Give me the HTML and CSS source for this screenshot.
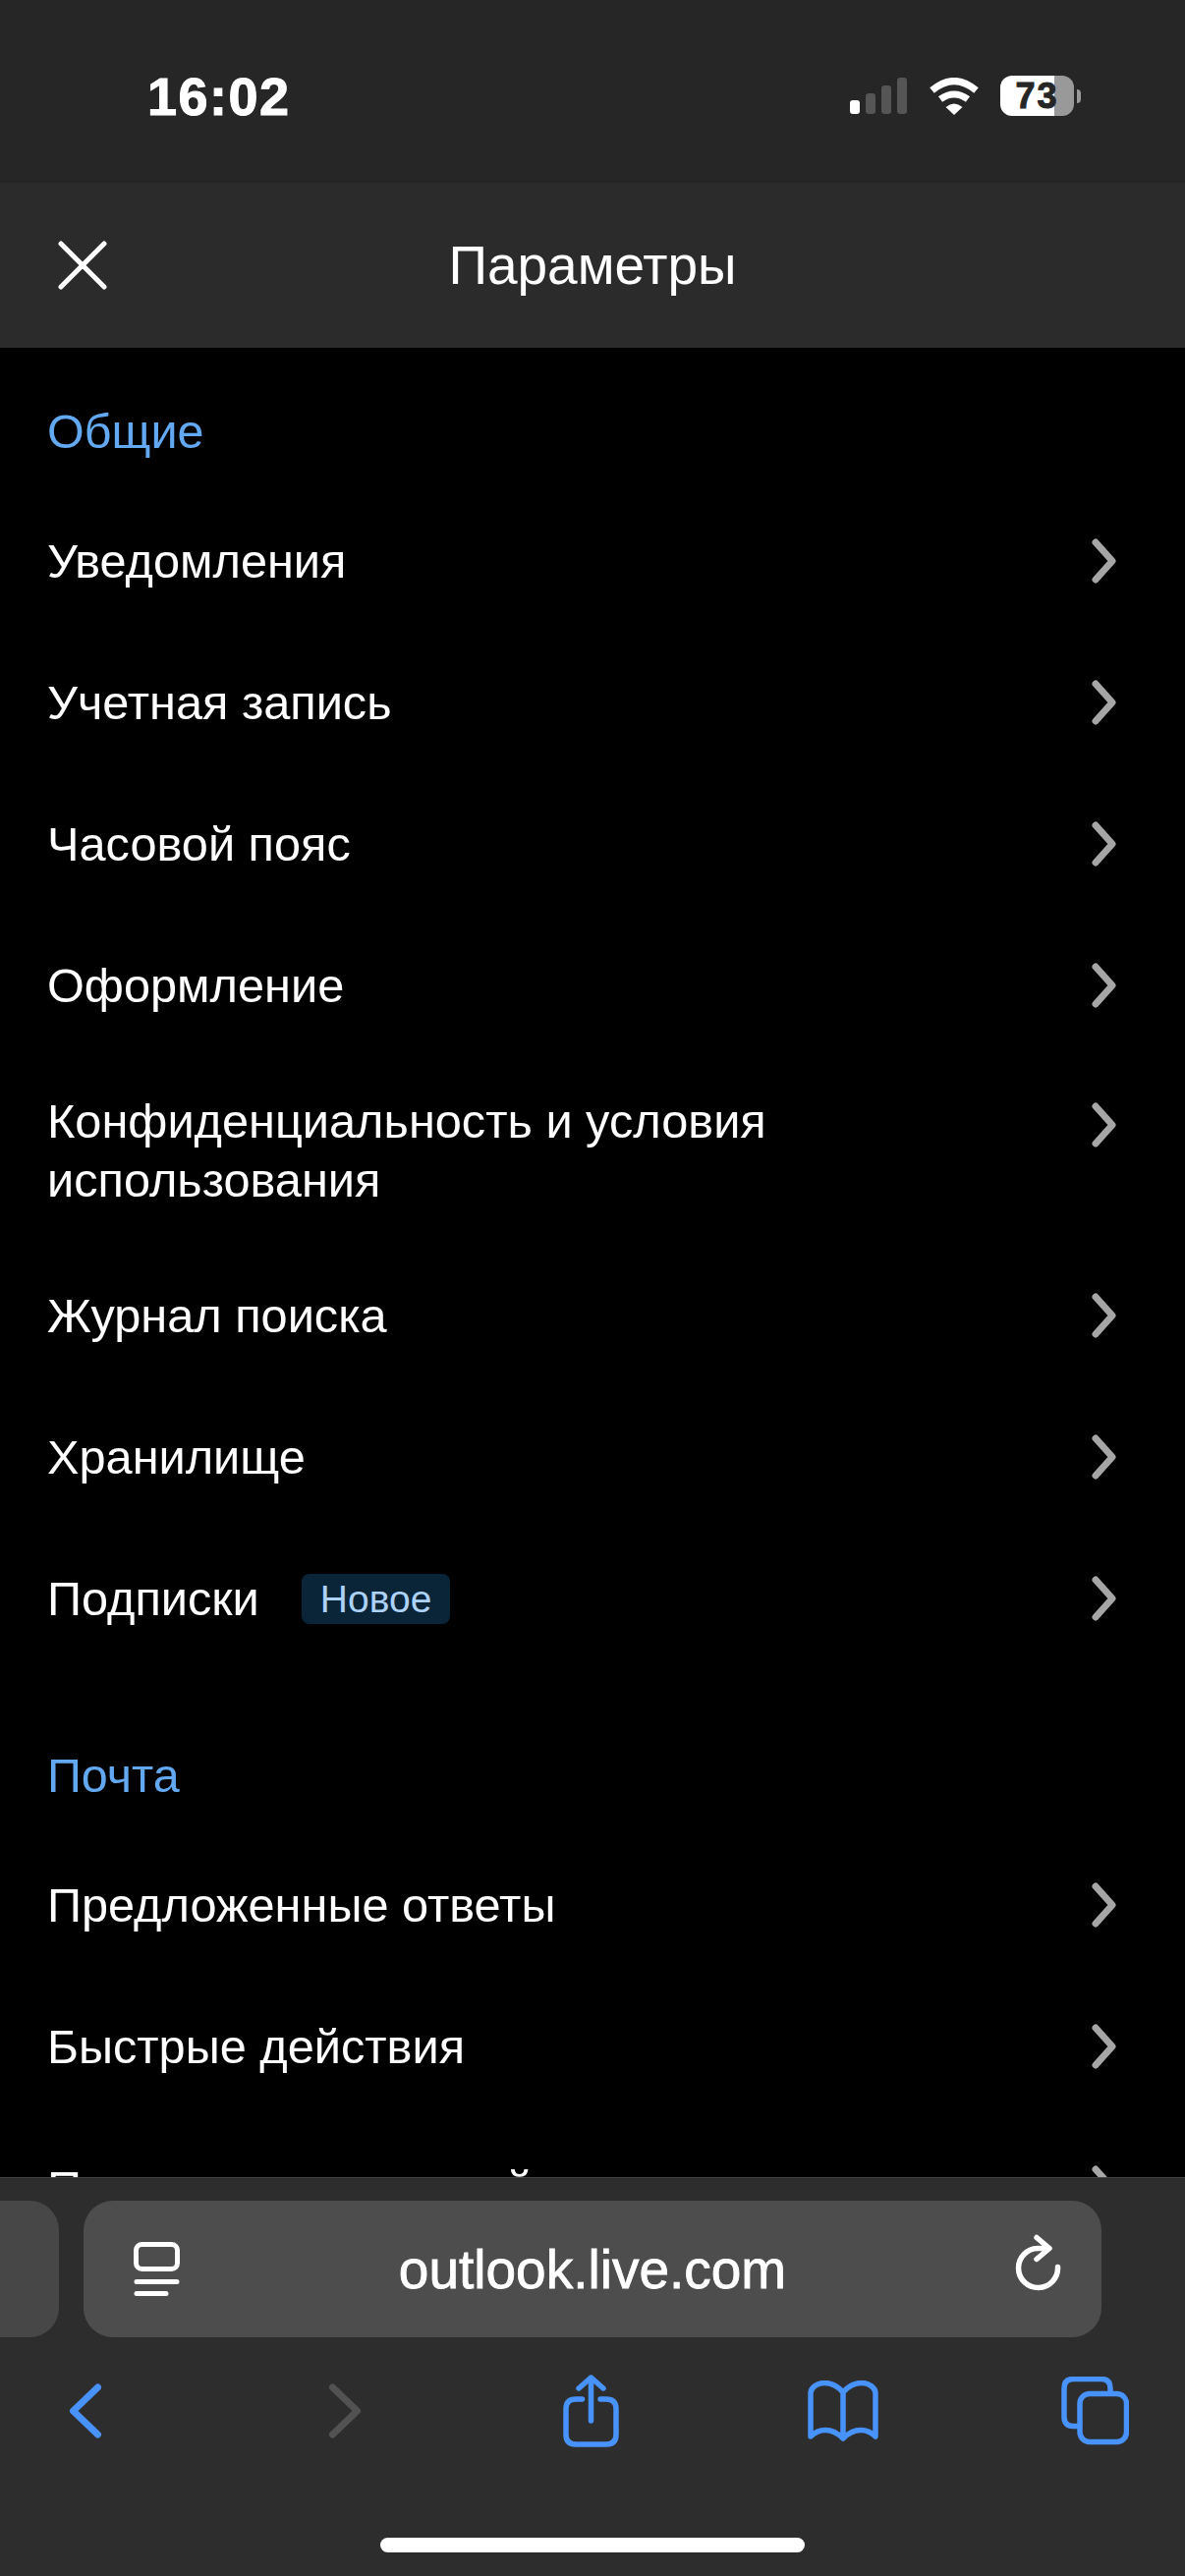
FILE: index.html
```html
<!DOCTYPE html>
<html lang="ru">
<head>
    <meta charset="UTF-8">
    <meta name="viewport" content="width=device-width, initial-scale=1.0">
    <title>Параметры</title>
    <link rel="stylesheet" href="styles.css">
</head>
<body>
    <div class="phone">
        <!-- Status bar -->
        <div class="status-bar">
            <span class="clock">16:02</span>
            <div class="status-icons">
                <svg class="signal" width="58" height="38" viewBox="0 0 58 38">
                    <rect x="0" y="23" width="10" height="14" rx="3" fill="#fff"/>
                    <rect x="16" y="16" width="10" height="21" rx="3" fill="#555"/>
                    <rect x="32" y="8" width="10" height="29" rx="3" fill="#555"/>
                    <rect x="48" y="0" width="10" height="37" rx="3" fill="#555"/>
                </svg>
                <svg class="wifi" width="52" height="38" viewBox="0 0 52 38">
                    <path d="M3.5 13 Q26 -6 48.5 13 M12 22 Q26 12 40 22" fill="none" stroke="#fff" stroke-width="7"/>
                    <path d="M17.5 30 Q26 23 34.5 30 L26 38 Z" fill="#fff"/>
                </svg>
                <div class="battery">
                    <div class="battery-body"><span class="battery-level">73</span></div>
                    <div class="battery-tip"></div>
                </div>
            </div>
        </div>

        <!-- Page header -->
        <header class="top-bar">
            <svg class="close-icon" width="54" height="54" viewBox="0 0 54 54">
                <path d="M5 5 L49 49 M49 5 L5 49" fill="none" stroke="#fff" stroke-width="5" stroke-linecap="round"/>
            </svg>
            <h1>Параметры</h1>
        </header>

        <!-- Settings list -->
        <main class="settings">
            <section class="group">
                <h2>Общие</h2>
                <div class="row"><span class="row-label">Уведомления</span><svg class="chevron" width="25" height="46" viewBox="0 0 25 46"><path d="M4 4 L21 23 L4 42"/></svg></div>
                <div class="row"><span class="row-label">Учетная запись</span><svg class="chevron" width="25" height="46" viewBox="0 0 25 46"><path d="M4 4 L21 23 L4 42"/></svg></div>
                <div class="row"><span class="row-label">Часовой пояс</span><svg class="chevron" width="25" height="46" viewBox="0 0 25 46"><path d="M4 4 L21 23 L4 42"/></svg></div>
                <div class="row"><span class="row-label">Оформление</span><svg class="chevron" width="25" height="46" viewBox="0 0 25 46"><path d="M4 4 L21 23 L4 42"/></svg></div>
                <div class="row row-tall"><span class="row-label">Конфиденциальность и условия использования</span><svg class="chevron" width="25" height="46" viewBox="0 0 25 46"><path d="M4 4 L21 23 L4 42"/></svg></div>
                <div class="row"><span class="row-label">Журнал поиска</span><svg class="chevron" width="25" height="46" viewBox="0 0 25 46"><path d="M4 4 L21 23 L4 42"/></svg></div>
                <div class="row"><span class="row-label">Хранилище</span><svg class="chevron" width="25" height="46" viewBox="0 0 25 46"><path d="M4 4 L21 23 L4 42"/></svg></div>
                <div class="row"><span class="row-label">Подписки<span class="badge">Новое</span></span><svg class="chevron" width="25" height="46" viewBox="0 0 25 46"><path d="M4 4 L21 23 L4 42"/></svg></div>
            </section>
            <section class="group">
                <h2>Почта</h2>
                <div class="row"><span class="row-label">Предложенные ответы</span><svg class="chevron" width="25" height="46" viewBox="0 0 25 46"><path d="M4 4 L21 23 L4 42"/></svg></div>
                <div class="row"><span class="row-label">Быстрые действия</span><svg class="chevron" width="25" height="46" viewBox="0 0 25 46"><path d="M4 4 L21 23 L4 42"/></svg></div>
                <div class="row"><span class="row-label">Параметры вложений</span><svg class="chevron" width="25" height="46" viewBox="0 0 25 46"><path d="M4 4 L21 23 L4 42"/></svg></div>
            </section>
        </main>

        <!-- Browser toolbar -->
        <footer class="browser-bar">
            <div class="url-row">
                <div class="prev-tab"></div>
                <div class="url-box">
                    <svg class="reader-icon" width="48" height="56" viewBox="0 0 48 56">
                        <rect x="2.5" y="2.5" width="42" height="25" rx="6" fill="none" stroke="#fff" stroke-width="5"/>
                        <path d="M3 40.5 H44 M3 52.5 H33" stroke="#fff" stroke-width="5" stroke-linecap="round"/>
                    </svg>
                    <span class="url-text">outlook.live.com</span>
                    <svg class="reload-icon" width="48" height="64" viewBox="0 0 48 64">
                        <path d="M34 14.5 H23.5 A20 20 0 1 0 43.5 33.5" fill="none" stroke="#fff" stroke-width="5.5" stroke-linecap="round"/>
                        <path d="M22 3.5 L35 14.5 L22 25.5" fill="none" stroke="#fff" stroke-width="5.5" stroke-linecap="round" stroke-linejoin="round"/>
                    </svg>
                </div>
            </div>
            <nav class="tool-row">
                <svg class="tool-back" width="34" height="56" viewBox="0 0 34 56"><path d="M29.5 4 L4.5 28 L29.5 52" class="tool-line"/></svg>
                <svg class="tool-forward" width="34" height="56" viewBox="0 0 34 56"><path d="M4.5 4 L29.5 28 L4.5 52" class="tool-line tool-off"/></svg>
                <svg class="tool-share" width="57" height="74" viewBox="0 0 57 74">
                    <path d="M19.5 25 H13 Q3 25 3 35 V61 Q3 71 13 71 H44 Q54 71 54 61 V35 Q54 25 44 25 H38 M28.5 47 V3 M16 14 L28.5 3 L41 14" class="tool-line thin"/>
                </svg>
                <svg class="tool-book" width="72" height="62" viewBox="0 0 72 62">
                    <path d="M36 12 C31 6 24 2.5 17 2.5 C10 2.5 3 7 3 13 V57 C7 53 12 50.5 18 50.5 C25 50.5 31 54 36 59 C41 54 47 50.5 54 50.5 C60 50.5 65 53 69 57 V13 C69 7 62 2.5 55 2.5 C48 2.5 41 6 36 12 V58" class="tool-line thin"/>
                </svg>
                <svg class="tool-tabs" width="69" height="70" viewBox="0 0 69 70">
                    <path d="M16 50.5 H12 Q3 50.5 3 41 V12 Q3 2.5 12 2.5 H41 Q50 2.5 50 12 V15" class="tool-line thin"/>
                    <rect x="19" y="17.5" width="47.5" height="49" rx="10" class="tool-line thin"/>
                </svg>
            </nav>
            <div class="home-indicator"></div>
        </footer>
    </div>
</body>
</html>
```

FILE: styles.css
```css
/* Basic styling */
* {
    margin: 0;
    padding: 0;
    box-sizing: border-box;
    font-family: 'Liberation Sans', Arial, sans-serif;
}

html, body {
    width: 1206px;
    height: 2622px;
    overflow: hidden;
    background-color: #000;
}

.phone {
    display: flex;
    flex-direction: column;
    width: 1206px;
    height: 2622px;
    color: #fff;
}

/* Status bar */
.status-bar {
    flex: none;
    display: flex;
    justify-content: space-between;
    height: 186px;
    padding: 68px 106px 0 150px;
    background-color: #262626;
}

.clock {
    font-size: 54px;
    line-height: 60px;
    font-weight: 700;
    letter-spacing: 1.5px;
    -webkit-text-stroke: 1px #fff;
}

.status-icons {
    display: flex;
    align-items: flex-start;
    padding-top: 11px;
}

.signal {
    margin-right: 22px;
}

.wifi {
    margin-right: 21px;
}

.battery {
    display: flex;
    align-items: center;
    margin-top: -2px;
}

.battery-body {
    width: 75px;
    height: 41px;
    border-radius: 12px;
    background: linear-gradient(to right, #fff 73%, #999 73%);
    text-align: center;
}

.battery-level {
    display: block;
    font-size: 36px;
    line-height: 41px;
    font-weight: 700;
    letter-spacing: 2px;
    color: #262626;
    -webkit-text-stroke: 1px #262626;
}

.battery-tip {
    width: 4px;
    height: 14px;
    margin-left: 3px;
    border-radius: 0 4px 4px 0;
    background-color: #999;
}

/* Page header */
.top-bar {
    flex: none;
    position: relative;
    display: flex;
    align-items: center;
    justify-content: center;
    height: 168px;
    background-color: #2b2b2b;
}

.top-bar h1 {
    font-size: 55px;
    font-weight: 400;
}

.close-icon {
    position: absolute;
    left: 57px;
    top: 57px;
}

/* Settings list */
.settings {
    flex: 1;
    min-height: 0;
    overflow: hidden;
    padding-top: 49px;
}

.group {
    margin-bottom: 72px;
}

.group h2 {
    height: 72px;
    margin-bottom: 24px;
    padding: 0 48px;
    font-size: 48.5px;
    line-height: 72px;
    font-weight: 400;
    color: #62a9f2;
}

.row {
    display: flex;
    align-items: center;
    justify-content: space-between;
    min-height: 144px;
    padding: 36px 70px 36px 48px;
    font-size: 48.7px;
    line-height: 60px;
}

.row-label {
    display: flex;
    align-items: center;
}

.row-tall {
    align-items: flex-start;
}

.row-tall .row-label {
    display: block;
    width: 840px;
}

.chevron {
    flex: none;
}

.row-tall .chevron {
    margin-top: 11px;
}

.chevron path {
    fill: none;
    stroke: #a6a6a6;
    stroke-width: 7;
    stroke-linecap: round;
    stroke-linejoin: round;
}

.badge {
    height: 51px;
    margin-left: 43px;
    padding: 0 19px;
    border-radius: 8px;
    background-color: #0a2438;
    color: #add2f7;
    font-size: 39px;
    line-height: 51px;
}

/* Browser toolbar */
.browser-bar {
    flex: none;
    height: 406px;
    border-top: 1px solid #444;
    background-color: #2d2d2d;
}

.url-row {
    display: flex;
    gap: 25px;
    height: 139px;
    margin-top: 23px;
}

.prev-tab {
    width: 60px;
    border-radius: 0 30px 30px 0;
    background-color: #474747;
}

.url-box {
    display: flex;
    align-items: center;
    justify-content: space-between;
    width: 1036px;
    padding: 0 40px 0 51px;
    border-radius: 30px;
    background-color: #4d4d4d;
}

.url-text {
    margin-right: 11px;
    font-size: 55px;
    font-weight: 400;
    -webkit-text-stroke: 0.8px #fff;
}

.reload-icon {
    margin-top: -7px;
}

.tool-row {
    display: flex;
    align-items: center;
    height: 92px;
    margin-top: 29px;
    padding-left: 70px;
}

.tool-forward {
    margin-left: 230px;
}

.tool-share {
    margin-left: 205px;
}

.tool-book {
    margin-left: 192px;
}

.tool-tabs {
    margin-left: 186px;
}

.tool-line {
    fill: none;
    stroke: #4892fc;
    stroke-width: 7;
    stroke-linecap: round;
    stroke-linejoin: round;
}

.tool-line.thin {
    stroke-width: 5.5;
}

.tool-off {
    stroke: #525252;
}

.home-indicator {
    width: 432px;
    height: 15px;
    margin: 83px auto 0;
    border-radius: 8px;
    background-color: #fff;
}
```
